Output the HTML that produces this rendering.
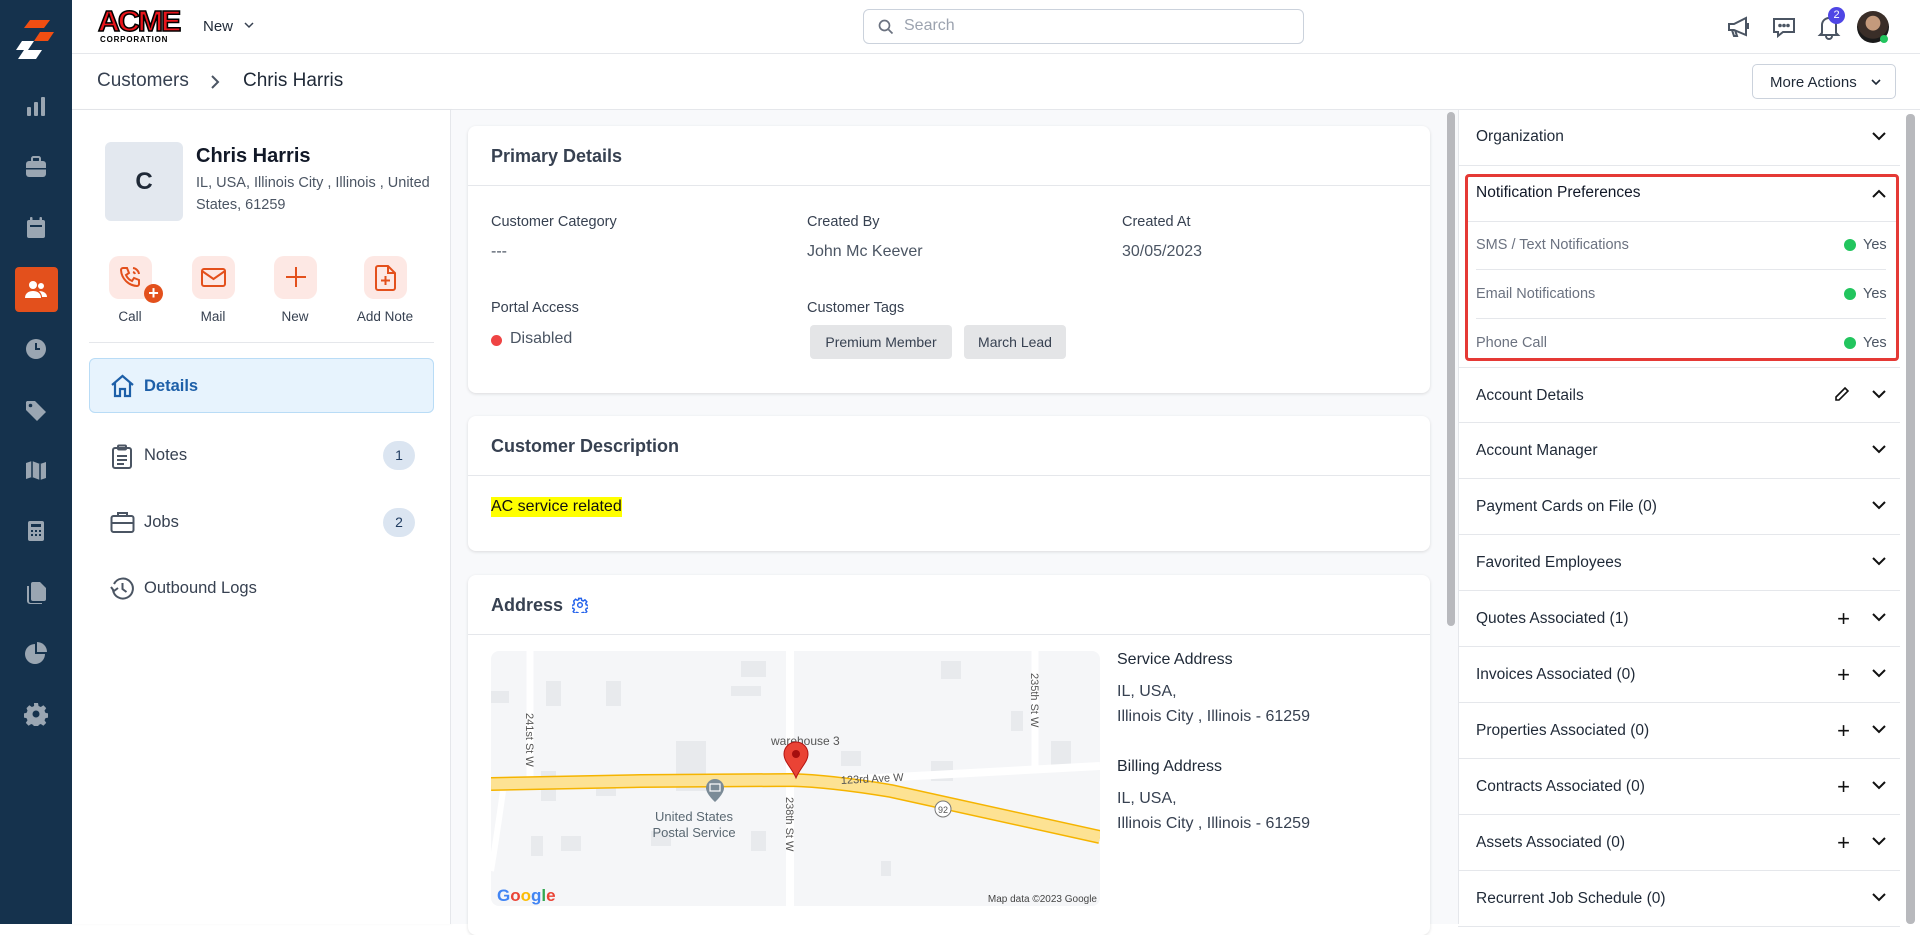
<!DOCTYPE html>
<html><head><meta charset="utf-8">
<style>
*{box-sizing:border-box;margin:0;padding:0}
body{width:1920px;height:924px;overflow:hidden;font-family:"Liberation Sans",sans-serif;background:#fff;position:relative;color:#1f2937}
.a{position:absolute}
.side{left:0;top:0;width:72px;height:924px;background:#15324d}
.si{position:absolute;left:24px;width:24px;height:24px}
.top{left:72px;top:0;width:1848px;height:54px;border-bottom:1px solid #e5e7eb;background:#fff}
.bc{left:72px;top:54px;width:1848px;height:56px;border-bottom:1px solid #e5e7eb;background:#fff}
.card{position:absolute;left:468px;width:962px;background:#fff;border-radius:8px;box-shadow:0 1px 3px rgba(0,0,0,.12)}
.ch{height:60px;border-bottom:1px solid #e5e7eb;padding:20px 23px;font-size:18px;font-weight:bold;color:#374151}
.lbl{position:absolute;font-size:14.5px;color:#374151}
.val{position:absolute;font-size:16px;color:#4b5563}
.rrow{position:absolute;left:1458px;width:442px;height:56px;border-bottom:1px solid #e5e7eb;font-size:15.5px;color:#1f2937}
.rrow span{position:absolute;left:18px;top:19px}
.chev{position:absolute;right:14px;top:22px;width:14px;height:9px}
.plus{position:absolute;right:50px;top:18px;font-size:22px;color:#111;line-height:20px}
.np{position:absolute;left:1476px;font-size:14.5px;color:#6b7280}
.yes{position:absolute;left:1863px;font-size:14.5px;color:#4b5563}
.yes:before{content:"";position:absolute;left:-19px;top:2px;width:12px;height:12px;border-radius:50%;background:#22c55e}
.act{position:absolute;top:256px;width:43px;height:43px;border-radius:10px;background:#fde8e4}
.actl{position:absolute;top:309px;font-size:13.5px;color:#374151;text-align:center;width:90px}
.nav{position:absolute;left:144px;font-size:16.5px;color:#374151}
.badge{position:absolute;left:383px;width:32px;height:29px;border-radius:15px;background:#dbe5f1;color:#1e3a5f;font-size:14px;text-align:center;line-height:29px}
</style></head><body>

<div class="a side">
<svg class="a" style="left:14px;top:20px" width="44" height="40" viewBox="0 0 44 40"><polygon points="16,0 36,0 30,8 10,8" fill="#f04e12"/><polygon points="26,12 40,12 34,21 20,21" fill="#f04e12"/><polygon points="8,21 20,21 14,30 2,30" fill="#fff"/><polygon points="10,30 28,30 22,39 4,39" fill="#fff"/></svg>
<svg class="si" style="top:95px" viewBox="0 0 24 24" fill="#9aa6b2"><rect x="3" y="12" width="4" height="9" rx="1"/><rect x="10" y="7" width="4" height="14" rx="1"/><rect x="17" y="2" width="4" height="19" rx="1"/></svg>
<svg class="si" style="top:155px" viewBox="0 0 24 24" fill="#9aa6b2"><rect x="8" y="2" width="8" height="5" rx="1.5" fill="none" stroke="#9aa6b2" stroke-width="2"/><rect x="2" y="6" width="20" height="16" rx="3"/><rect x="2" y="13" width="20" height="1.5" fill="#15324d"/></svg>
<svg class="si" style="top:216px" viewBox="0 0 24 24" fill="#9aa6b2"><rect x="3" y="4" width="18" height="18" rx="2"/><rect x="6" y="1" width="2.5" height="5" rx="1"/><rect x="15.5" y="1" width="2.5" height="5" rx="1"/><rect x="6" y="9" width="12" height="2" fill="#15324d"/></svg>
<div class="a" style="left:15px;top:267px;width:43px;height:45px;background:#e3501c;border-radius:4px"></div>
<svg class="si" style="top:278px" viewBox="0 0 24 24" fill="#fff"><circle cx="9" cy="7" r="4"/><path d="M1 20c0-5 4-7 8-7s8 2 8 7z"/><circle cx="17" cy="8" r="3"/><path d="M15 13c4 0 8 2 8 6h-5c0-2-1-4-3-6z"/></svg>
<svg class="si" style="top:337px" viewBox="0 0 24 24"><circle cx="12" cy="12" r="10" fill="#9aa6b2"/><path d="M12 6v6h4" stroke="#15324d" stroke-width="2" fill="none"/></svg>
<svg class="si" style="top:398px" viewBox="0 0 24 24" fill="#9aa6b2"><path d="M2 4v8l11 11 9-9L11 3H3z"/><circle cx="6.5" cy="7.5" r="1.8" fill="#15324d"/></svg>
<svg class="si" style="top:458px" viewBox="0 0 24 24" fill="#9aa6b2"><path d="M2 5l6-2 8 3 6-2v16l-6 2-8-3-6 2z"/><path d="M8 3v16M16 6v16" stroke="#15324d" stroke-width="1.5"/></svg>
<svg class="si" style="top:519px" viewBox="0 0 24 24" fill="#9aa6b2"><rect x="4" y="2" width="16" height="20" rx="2"/><rect x="7" y="5" width="10" height="3" fill="#15324d"/><g fill="#15324d"><rect x="7" y="11" width="2" height="2"/><rect x="11" y="11" width="2" height="2"/><rect x="15" y="11" width="2" height="2"/><rect x="7" y="15" width="2" height="2"/><rect x="11" y="15" width="2" height="2"/><rect x="15" y="15" width="2" height="2"/></g></svg>
<svg class="si" style="top:581px" viewBox="0 0 24 24" fill="#9aa6b2"><path d="M9 1h7l6 6v11a2 2 0 0 1-2 2H9a2 2 0 0 1-2-2V3a2 2 0 0 1 2-2z"/><path d="M5 5v15a2 2 0 0 0 2 2h11v1H6a3 3 0 0 1-3-3V5z"/></svg>
<svg class="si" style="top:641px" viewBox="0 0 24 24" fill="#9aa6b2"><path d="M11 3a10 10 0 1 0 10 10H11z"/><path d="M13 1v10h10A10 10 0 0 0 13 1z"/></svg>
<svg class="si" style="top:702px" viewBox="0 0 24 24"><path fill="#9aa6b2" d="M10 1h4l.6 3 2.2 1 2.6-1.7 2.8 2.8-1.7 2.6 1 2.2 3 .6v4l-3 .6-1 2.2 1.7 2.6-2.8 2.8-2.6-1.7-2.2 1-.6 3h-4l-.6-3-2.2-1-2.6 1.7-2.8-2.8 1.7-2.6-1-2.2-3-.6v-4l3-.6 1-2.2L2.5 6.1l2.8-2.8 2.6 1.7 2.2-1z"/><circle cx="12" cy="12" r="3.5" fill="#15324d"/></svg>
</div>

<div class="a top">
<div class="a" style="left:26px;top:9px;width:84px;height:38px">
<div style="font-family:'Liberation Sans',sans-serif;font-weight:bold;font-size:29px;color:#e8151b;letter-spacing:-2px;line-height:26px;-webkit-text-stroke:1.5px #000;transform:scaleX(1.05);transform-origin:left">ACME</div>
<div style="font-size:8px;font-weight:bold;letter-spacing:.8px;color:#000;margin-left:2px">CORPORATION</div></div>
<div class="a" style="left:131px;top:18px;font-size:15px;color:#1f2937">New</div>
<svg class="a" style="left:172px;top:22px" width="10" height="7" viewBox="0 0 10 7"><path d="M1 1l4 4 4-4" stroke="#374151" stroke-width="1.5" fill="none"/></svg>
<div class="a" style="left:791px;top:9px;width:441px;height:35px;border:1px solid #cbd2dc;border-radius:6px"></div>
<svg class="a" style="left:806px;top:19px" width="16" height="16" viewBox="0 0 16 16"><circle cx="6.5" cy="6.5" r="5" stroke="#6b7280" stroke-width="1.7" fill="none"/><path d="M10.5 10.5l4 4" stroke="#6b7280" stroke-width="1.7"/></svg>
<div class="a" style="left:832px;top:17px;font-size:16px;color:#9ca3af">Search</div>
<svg class="a" style="left:1654px;top:15px" width="26" height="24" viewBox="0 0 26 24" fill="none" stroke="#4b5563" stroke-width="2"><path d="M3 9h5l12-6v17L8 15H3z"/><path d="M6 15l2 6h3l-2-6"/><path d="M22 8v6"/></svg>
<svg class="a" style="left:1699px;top:15px" width="26" height="24" viewBox="0 0 26 24" fill="none" stroke="#4b5563" stroke-width="2"><path d="M3 4h20v13H12l-5 4v-4H3z"/><circle cx="9" cy="10.5" r=".8" fill="#4b5563"/><circle cx="13" cy="10.5" r=".8" fill="#4b5563"/><circle cx="17" cy="10.5" r=".8" fill="#4b5563"/></svg>
<svg class="a" style="left:1745px;top:14px" width="24" height="26" viewBox="0 0 24 26" fill="none" stroke="#4b5563" stroke-width="2"><path d="M5 19V11a7 7 0 0 1 14 0v8l2 2H3z"/><path d="M9 22a3 3 0 0 0 6 0"/></svg>
<div class="a" style="left:1756px;top:7px;width:17px;height:17px;border-radius:50%;background:#4f46e5;color:#fff;font-size:11px;text-align:center;line-height:17px">2</div>
<div class="a" style="left:1785px;top:11px;width:32px;height:32px;border-radius:50%;background:radial-gradient(circle at 50% 38%,#c49a7c 0 28%,#3a2e28 30% 60%,#1a1a1a 62%)"></div>
<div class="a" style="left:1808px;top:35px;width:8px;height:8px;border-radius:50%;background:#22c55e"></div>
</div>

<div class="a bc">
<div class="a" style="left:25px;top:16px;font-size:19px;color:#374151">Customers</div>
<svg class="a" style="left:138px;top:21px" width="10" height="14" viewBox="0 0 10 14"><path d="M2 1l6 6-6 6" stroke="#4b5563" stroke-width="2" fill="none"/></svg>
<div class="a" style="left:171px;top:16px;font-size:19px;color:#1f2937">Chris Harris</div>
<div class="a" style="left:1680px;top:10px;width:144px;height:35px;border:1px solid #cbd2dc;border-radius:5px;font-size:15px;color:#1f2937;padding:9px 0 0 17px">More Actions</div>
<svg class="a" style="left:1799px;top:25px" width="10" height="7" viewBox="0 0 10 7"><path d="M1 1l4 4 4-4" stroke="#1f2937" stroke-width="1.6" fill="none"/></svg>
</div>

<div class="a" style="left:72px;top:110px;width:379px;height:814px;background:#fff;border-right:1px solid #e5e7eb;box-shadow:1px 0 3px rgba(0,0,0,.04)"></div>
<div class="a" style="left:105px;top:142px;width:78px;height:79px;border-radius:6px;background:#e3e8ef;font-size:24px;font-weight:bold;text-align:center;line-height:79px;color:#1f2937">C</div>
<div class="a" style="left:196px;top:145px;font-size:20px;font-weight:bold;color:#111827">Chris Harris</div>
<div class="a" style="left:196px;top:172px;width:245px;font-size:14.5px;line-height:22px;color:#4b5563">IL, USA, Illinois City , Illinois , United States, 61259</div>
<div class="act" style="left:109px"></div>
<svg class="a" style="left:118px;top:265px" width="26" height="26" viewBox="0 0 26 26" fill="none" stroke="#e3501c" stroke-width="2"><path d="M5 3h4l2 5-3 2a11 11 0 0 0 6 6l2-3 5 2v4a2 2 0 0 1-2 2A17 17 0 0 1 3 5a2 2 0 0 1 2-2z"/><path d="M15 3a7 7 0 0 1 6 6M15 7a3 3 0 0 1 2 2"/></svg>
<div class="a" style="left:144px;top:284px;width:19px;height:19px;border-radius:50%;background:#e3501c;color:#fff;font-size:18px;font-weight:bold;text-align:center;line-height:19px">+</div>
<div class="act" style="left:192px"></div>
<svg class="a" style="left:201px;top:267px" width="25" height="21" viewBox="0 0 25 21" fill="none" stroke="#e3501c" stroke-width="2"><rect x="1" y="2" width="23" height="17" rx="2"/><path d="M1 4l11.5 8L24 4"/></svg>
<div class="act" style="left:274px"></div>
<svg class="a" style="left:285px;top:266px" width="22" height="22" viewBox="0 0 22 22" stroke="#e3501c" stroke-width="2"><path d="M11 1v20M1 11h20"/></svg>
<div class="act" style="left:364px"></div>
<svg class="a" style="left:375px;top:265px" width="22" height="26" viewBox="0 0 22 26" fill="none" stroke="#e3501c" stroke-width="2"><path d="M3 1h10l7 7v15a2 2 0 0 1-2 2H3a2 2 0 0 1-2-2V3a2 2 0 0 1 2-2z"/><path d="M13 1v7h7M10.5 11v9M6 15.5h9"/></svg>
<div class="actl" style="left:85px">Call</div>
<div class="actl" style="left:168px">Mail</div>
<div class="actl" style="left:250px">New</div>
<div class="actl" style="left:340px">Add Note</div>
<div class="a" style="left:89px;top:342px;width:345px;height:1px;background:#e5e7eb"></div>
<div class="a" style="left:89px;top:358px;width:345px;height:55px;border-radius:6px;background:#e7f3fd;border:1px solid #b9dcf6"></div>
<svg class="a" style="left:110px;top:374px" width="25" height="24" viewBox="0 0 25 24" fill="none" stroke="#1d5fa8" stroke-width="2.2"><path d="M2 11L12.5 2 23 11M5 9v13h5v-7h5v7h5V9"/></svg>
<div class="nav" style="top:377px;color:#1d5fa8;font-weight:bold">Details</div>
<svg class="a" style="left:111px;top:444px" width="22" height="26" viewBox="0 0 22 26" fill="none" stroke="#4b5563" stroke-width="2"><rect x="2" y="4" width="18" height="20" rx="2"/><rect x="7" y="1.5" width="8" height="4" rx="1"/><path d="M6 12h10M6 16h10M6 20h7"/></svg>
<div class="nav" style="top:446px">Notes</div>
<div class="badge" style="top:441px">1</div>
<svg class="a" style="left:110px;top:511px" width="25" height="23" viewBox="0 0 25 23" fill="none" stroke="#4b5563" stroke-width="2"><rect x="1.5" y="5" width="22" height="16" rx="2"/><path d="M8 5V2h9v3M1.5 12h22"/></svg>
<div class="nav" style="top:513px">Jobs</div>
<div class="badge" style="top:508px">2</div>
<svg class="a" style="left:110px;top:576px" width="25" height="25" viewBox="0 0 25 25" fill="none" stroke="#4b5563" stroke-width="2"><path d="M4 8a10 10 0 1 1-1 6"/><path d="M1 11l3 4 4-3"/><path d="M12.5 7v6l4 3"/></svg>
<div class="nav" style="top:579px">Outbound Logs</div>

<div class="a" style="left:451px;top:110px;width:1007px;height:814px;background:#f8f9fb"></div>
<div class="a" style="left:1447px;top:112px;width:8px;height:514px;border-radius:4px;background:#b8b9bd"></div>

<div class="card" style="top:126px;height:267px">
<div class="ch">Primary Details</div>
<div class="lbl" style="left:23px;top:88px">Customer Category</div>
<div class="lbl" style="left:339px;top:88px">Created By</div>
<div class="lbl" style="left:654px;top:88px">Created At</div>
<div class="val" style="left:23px;top:117px">---</div>
<div class="val" style="left:339px;top:117px">John Mc Keever</div>
<div class="val" style="left:654px;top:117px">30/05/2023</div>
<div class="lbl" style="left:23px;top:174px">Portal Access</div>
<div class="lbl" style="left:339px;top:174px">Customer Tags</div>
<div class="a" style="left:23px;top:209px;width:11px;height:11px;border-radius:50%;background:#ef4444"></div>
<div class="val" style="left:42px;top:204px">Disabled</div>
<div class="a" style="left:342px;top:199px;width:142px;height:34px;border-radius:4px;background:#e4e5e7;font-size:14px;color:#374151;text-align:center;line-height:34px">Premium Member</div>
<div class="a" style="left:496px;top:199px;width:102px;height:34px;border-radius:4px;background:#e4e5e7;font-size:14px;color:#374151;text-align:center;line-height:34px">March Lead</div>
</div>

<div class="card" style="top:416px;height:135px">
<div class="ch">Customer Description</div>
<div class="a" style="left:23px;top:81px;background:#ffff00;font-size:16px;color:#111;padding:1px 0">AC service related</div>
</div>

<div class="card" style="top:575px;height:360px">
<div class="ch">Address <svg style="vertical-align:-2px;margin-left:4px" width="16" height="16" viewBox="0 0 24 24"><path fill="none" stroke="#2563eb" stroke-width="2.2" d="M10 2h4l.6 3 2.2 1 2.6-1.7 2.8 2.8-1.7 2.6 1 2.2 3 .6v4l-3 .6-1 2.2 1.7 2.6-2.8 2.8-2.6-1.7-2.2 1-.6 3h-4l-.6-3-2.2-1-2.6 1.7-2.8-2.8 1.7-2.6-1-2.2-3-.6v-4l3-.6 1-2.2L2.5 6.1l2.8-2.8 2.6 1.7 2.2-1z"/><circle cx="12" cy="12" r="3.5" fill="none" stroke="#2563eb" stroke-width="2.2"/></svg></div>
<svg class="a" style="left:23px;top:76px;border-radius:8px" width="609" height="255" viewBox="0 0 609 255">
<rect width="609" height="255" fill="#f5f6f8"/>
<g fill="#e8eaed"><rect x="250" y="10" width="25" height="16"/><rect x="240" y="35" width="30" height="10"/><rect x="55" y="30" width="15" height="25"/><rect x="115" y="30" width="15" height="25"/><rect x="185" y="90" width="30" height="50"/><rect x="50" y="120" width="15" height="30"/><rect x="105" y="125" width="20" height="20"/><rect x="350" y="100" width="20" height="15"/><rect x="450" y="10" width="20" height="18"/><rect x="440" y="110" width="22" height="20"/><rect x="560" y="90" width="20" height="25"/><rect x="520" y="60" width="12" height="20"/><rect x="40" y="185" width="12" height="20"/><rect x="70" y="185" width="20" height="15"/><rect x="160" y="180" width="20" height="15"/><rect x="260" y="180" width="15" height="20"/><rect x="390" y="210" width="10" height="15"/><rect x="0" y="40" width="18" height="12"/></g>
<path d="M299 0V255" stroke="#fff" stroke-width="8"/>
<path d="M39 0V132" stroke="#fff" stroke-width="7"/>
<path d="M544 0V117" stroke="#fff" stroke-width="7"/>
<path d="M330 130L609 115" stroke="#fff" stroke-width="8"/>
<path d="M12 140Q5 190 0 220" stroke="#fff" stroke-width="6" fill="none"/>
<path d="M0 133L150 130L300 129Q340 130 400 140L609 186" stroke="#f5b400" stroke-width="14" fill="none"/>
<path d="M0 133L150 130L300 129Q340 130 400 140L609 186" stroke="#fde293" stroke-width="11" fill="none"/>
<circle cx="452" cy="158" r="8" fill="#fff" stroke="#777"/><text x="452" y="162" font-size="9" text-anchor="middle" fill="#555" font-family="Liberation Sans">92</text>
<text x="280" y="94" font-size="12" fill="#555" font-family="Liberation Sans">warehouse 3</text>
<text x="350" y="133" font-size="11" fill="#555" font-family="Liberation Sans" transform="rotate(-3 350 133)">123rd Ave W</text>
<text x="0" y="0" font-size="11" fill="#555" font-family="Liberation Sans" transform="translate(35 62) rotate(90)">241st St W</text>
<text x="0" y="0" font-size="11" fill="#555" font-family="Liberation Sans" transform="translate(295 146) rotate(90)">238th St W</text>
<text x="0" y="0" font-size="11" fill="#555" font-family="Liberation Sans" transform="translate(540 22) rotate(90)">235th St W</text>
<path d="M224 128a9 9 0 0 1 9 9c0 6-9 14-9 14s-9-8-9-14a9 9 0 0 1 9-9z" fill="#7b8b97"/><rect x="219" y="133" width="10" height="7" fill="none" stroke="#fff" stroke-width="1.2"/>
<text x="203" y="170" font-size="13" fill="#5a6872" text-anchor="middle" font-family="Liberation Sans">United States</text>
<text x="203" y="186" font-size="13" fill="#5a6872" text-anchor="middle" font-family="Liberation Sans">Postal Service</text>
<path d="M305 127c-4-10-12-16-12-24a12 12 0 0 1 24 0c0 8-8 14-12 24z" fill="#ea4335" stroke="#b31412"/><circle cx="305" cy="103" r="4" fill="#a50e0e"/>
<text x="6" y="250" font-size="17" font-family="Liberation Sans" font-weight="bold"><tspan fill="#4285f4">G</tspan><tspan fill="#ea4335">o</tspan><tspan fill="#fbbc05">o</tspan><tspan fill="#4285f4">g</tspan><tspan fill="#34a853">l</tspan><tspan fill="#ea4335">e</tspan></text>
<rect x="485" y="238" width="124" height="17" fill="#f5f6f8" opacity=".8"/><text x="606" y="251" font-size="10" fill="#444" text-anchor="end" font-family="Liberation Sans">Map data ©2023 Google</text>
</svg>
<div class="a" style="left:649px;top:76px;font-size:16px;color:#1f2937">Service Address</div>
<div class="a" style="left:649px;top:104px;font-size:16px;color:#374151;line-height:25px">IL, USA,<br>Illinois City , Illinois - 61259</div>
<div class="a" style="left:649px;top:183px;font-size:16px;color:#1f2937">Billing Address</div>
<div class="a" style="left:649px;top:211px;font-size:16px;color:#374151;line-height:25px">IL, USA,<br>Illinois City , Illinois - 61259</div>
</div>

<div class="a" style="left:1458px;top:110px;width:462px;height:814px;background:#fff;border-left:1px solid #e5e7eb"></div>
<div class="a" style="left:1906px;top:114px;width:9px;height:810px;border-radius:4px;background:#b8b9bd"></div>
<div class="rrow" style="top:110px"><span style="top:18px">Organization</span><svg class="chev" viewBox="0 0 14 9"><path d="M1 1l6 6 6-6" stroke="#111" stroke-width="2" fill="none"/></svg></div>
<div class="a" style="left:1465px;top:174px;width:434px;height:187px;border:3px solid #e53935;border-radius:4px"></div>
<div class="a" style="left:1476px;top:184px;font-size:15.5px;color:#111827">Notification Preferences</div>
<svg class="a" style="left:1872px;top:189px" width="14" height="9" viewBox="0 0 14 9"><path d="M1 8l6-6 6 6" stroke="#111" stroke-width="2" fill="none"/></svg>
<div class="a" style="left:1468px;top:221px;width:428px;height:1px;background:#e5e7eb"></div>
<div class="a" style="left:1476px;top:269px;width:410px;height:1px;background:#e5e7eb"></div>
<div class="a" style="left:1476px;top:318px;width:410px;height:1px;background:#e5e7eb"></div>
<div class="np" style="top:237px">SMS / Text Notifications</div><div class="yes" style="top:237px">Yes</div>
<div class="np" style="top:286px">Email Notifications</div><div class="yes" style="top:286px">Yes</div>
<div class="np" style="top:335px">Phone Call</div><div class="yes" style="top:335px">Yes</div>

<div class="rrow" style="top:367px;border-top:1px solid #e5e7eb"><span>Account Details</span><svg style="position:absolute;right:50px;top:18px" width="16" height="16" viewBox="0 0 16 16" fill="none" stroke="#111" stroke-width="1.6"><path d="M11 2l3 3-9 9H2v-3z"/></svg><svg class="chev" viewBox="0 0 14 9"><path d="M1 1l6 6 6-6" stroke="#111" stroke-width="2" fill="none"/></svg></div>
<div class="rrow" style="top:423px"><span>Account Manager</span><svg class="chev" viewBox="0 0 14 9"><path d="M1 1l6 6 6-6" stroke="#111" stroke-width="2" fill="none"/></svg></div>
<div class="rrow" style="top:479px"><span>Payment Cards on File (0)</span><svg class="chev" viewBox="0 0 14 9"><path d="M1 1l6 6 6-6" stroke="#111" stroke-width="2" fill="none"/></svg></div>
<div class="rrow" style="top:535px"><span>Favorited Employees</span><svg class="chev" viewBox="0 0 14 9"><path d="M1 1l6 6 6-6" stroke="#111" stroke-width="2" fill="none"/></svg></div>
<div class="rrow" style="top:591px"><span>Quotes Associated (1)</span><div class="plus">+</div><svg class="chev" viewBox="0 0 14 9"><path d="M1 1l6 6 6-6" stroke="#111" stroke-width="2" fill="none"/></svg></div>
<div class="rrow" style="top:647px"><span>Invoices Associated (0)</span><div class="plus">+</div><svg class="chev" viewBox="0 0 14 9"><path d="M1 1l6 6 6-6" stroke="#111" stroke-width="2" fill="none"/></svg></div>
<div class="rrow" style="top:703px"><span>Properties Associated (0)</span><div class="plus">+</div><svg class="chev" viewBox="0 0 14 9"><path d="M1 1l6 6 6-6" stroke="#111" stroke-width="2" fill="none"/></svg></div>
<div class="rrow" style="top:759px"><span>Contracts Associated (0)</span><div class="plus">+</div><svg class="chev" viewBox="0 0 14 9"><path d="M1 1l6 6 6-6" stroke="#111" stroke-width="2" fill="none"/></svg></div>
<div class="rrow" style="top:815px"><span>Assets Associated (0)</span><div class="plus">+</div><svg class="chev" viewBox="0 0 14 9"><path d="M1 1l6 6 6-6" stroke="#111" stroke-width="2" fill="none"/></svg></div>
<div class="rrow" style="top:871px"><span>Recurrent Job Schedule (0)</span><svg class="chev" viewBox="0 0 14 9"><path d="M1 1l6 6 6-6" stroke="#111" stroke-width="2" fill="none"/></svg></div>
</body></html>
